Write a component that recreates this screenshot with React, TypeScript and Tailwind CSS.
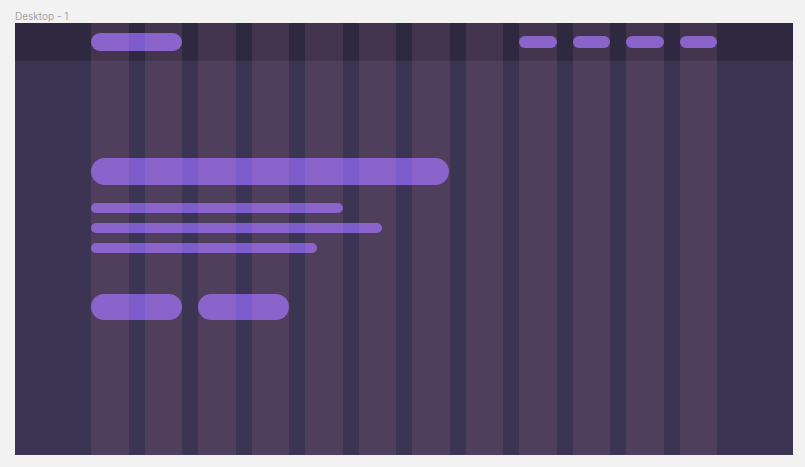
export default function App() {
  const overlayCols = Array.from({ length: 12 });
  return (
    <div className="w-[805px] h-[467px] bg-[#f2f2f2] overflow-hidden" style={{ fontFamily: "Inter, 'Noto Sans', sans-serif" }}>
      <div className="pl-[15px] pt-[10px] h-[23px] text-[10px] leading-[12px] text-[#a3a3a3]">Desktop - 1</div>
      <div className="relative ml-[15px] w-[778px] h-[432px] bg-[#3b3452] overflow-hidden">
        <div className="h-[38px] bg-[#2e2941] px-[76px] grid grid-cols-12 gap-4 items-center">
          <div className="col-span-2 h-[18px] rounded-full bg-[#7d5dcc]" />
          <div className="col-start-9 h-3 rounded-full bg-[#7d5dcc]" />
          <div className="h-3 rounded-full bg-[#7d5dcc]" />
          <div className="h-3 rounded-full bg-[#7d5dcc]" />
          <div className="h-3 rounded-full bg-[#7d5dcc]" />
        </div>
        <div className="px-[76px] pt-[97px] flex flex-col">
          <div className="w-[358px] h-[27px] rounded-full bg-[#7d5dcc]" />
          <div className="mt-[18px] flex flex-col gap-[10px]">
            <div className="w-[252px] h-[10px] rounded-full bg-[#7d5dcc]" />
            <div className="w-[291px] h-[10px] rounded-full bg-[#7d5dcc]" />
            <div className="w-[226px] h-[10px] rounded-full bg-[#7d5dcc]" />
          </div>
          <div className="mt-[41px] flex gap-4">
            <div className="w-[91px] h-[26px] rounded-full bg-[#7d5dcc]" />
            <div className="w-[91px] h-[26px] rounded-full bg-[#7d5dcc]" />
          </div>
        </div>
        <div className="absolute inset-0 px-[76px] grid grid-cols-12 gap-4 pointer-events-none">
          {overlayCols.map((_, i) => (
            <div key={i} className="bg-[rgba(255,170,190,0.1)]" />
          ))}
        </div>
      </div>
    </div>
  );
}
